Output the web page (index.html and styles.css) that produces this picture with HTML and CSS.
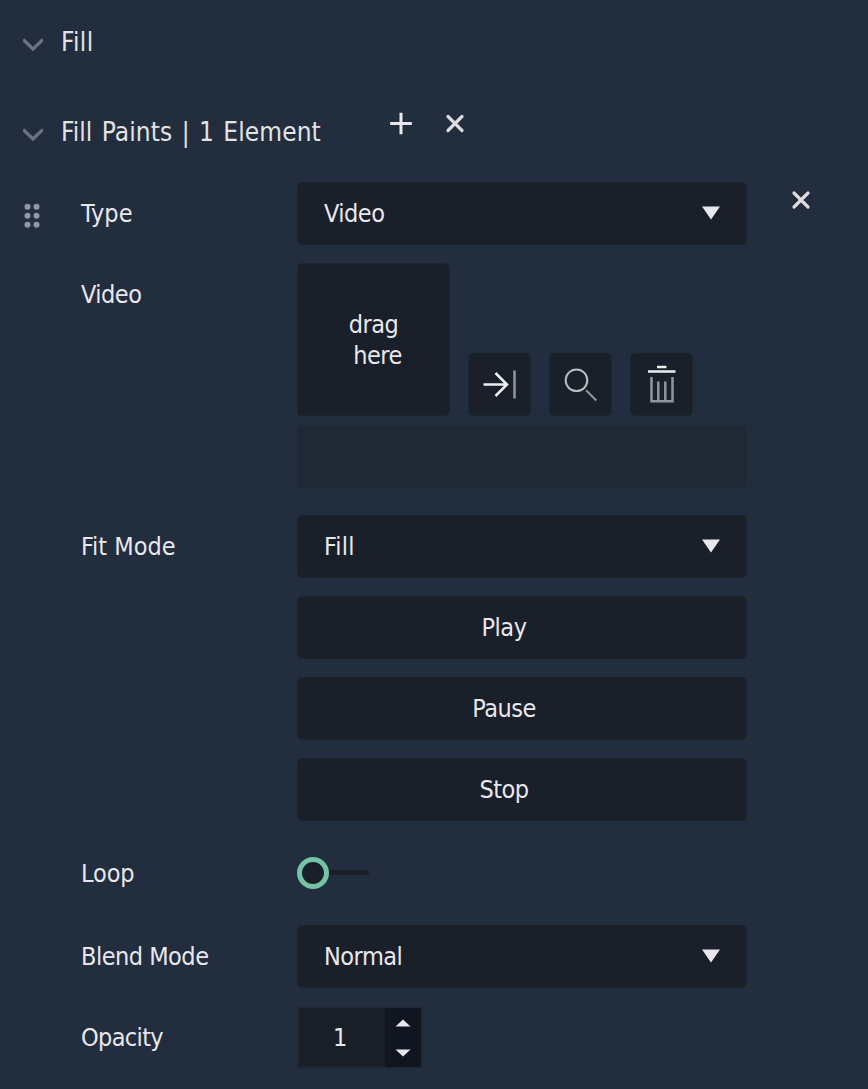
FILE: index.html
```html
<!DOCTYPE html>
<html lang="en">
<head>
<meta charset="utf-8">
<title>Fill</title>
<link rel="stylesheet" href="styles.css">
</head>
<body>
<main class="panel">
  <header class="section">
    <svg class="chevron" width="20" height="18" viewBox="0 0 20 18"><path d="M0 3.5L10 13L20 3.5"/></svg>
    <h2 class="title title-fill">Fill</h2>
  </header>
  <header class="section section-paints">
    <svg class="chevron" width="20" height="18" viewBox="0 0 20 18"><path d="M0 3.5L10 13L20 3.5"/></svg>
    <h2 class="title title-paints">Fill Paints | 1 Element</h2>
    <svg class="add" width="24" height="24" viewBox="0 0 24 24"><path d="M1.2 12.5H22.8M12 1.7V23.3"/></svg>
    <svg class="remove" width="20" height="20" viewBox="0 0 20 20"><path d="M3 2.5L17 16.5M17 2.5L3 16.5"/></svg>
  </header>

  <div class="row">
    <svg class="grip" width="16" height="26" viewBox="0 0 16 26"><circle cx="3.5" cy="3.7" r="3"/><circle cx="12.5" cy="3.7" r="3"/><circle cx="3.5" cy="12.7" r="3"/><circle cx="12.5" cy="12.7" r="3"/><circle cx="3.5" cy="21.7" r="3"/><circle cx="12.5" cy="21.7" r="3"/></svg>
    <span class="label"><span class="t-type">Type</span></span>
    <div class="box select"><span class="t-video">Video</span><svg width="18" height="14" viewBox="0 0 18 14"><path d="M0 .5H18L9 13.5Z"/></svg></div>
    <svg class="remove remove-row" width="20" height="20" viewBox="0 0 20 20"><path d="M3 3L17 17M17 3L3 17"/></svg>
  </div>

  <div class="row row-media">
    <span class="label"><span class="t-video">Video</span></span>
    <div class="media">
      <div class="box drop"><span class="drag">drag</span><span class="here">here</span></div>
      <div class="box tool"><svg width="63" height="63" viewBox="0 0 63 63"><path class="bright" d="M15.5 31.5H38.5M27.5 20L39 31.5L27.5 43"/><path class="dim thick" d="M46.5 17.5V45.5"/></svg></div>
      <div class="box tool"><svg width="63" height="63" viewBox="0 0 63 63"><circle class="mid" cx="27.5" cy="27.3" r="10.8"/><path class="dim" d="M37 37.3L47.3 47.5"/></svg></div>
      <div class="box tool"><svg width="63" height="63" viewBox="0 0 63 63"><path class="lid" d="M27 14H36.5M18 18.5H45.5"/><path class="dim thick" d="M21.5 24V48.3H42.5V24M28.3 28.5V48M35.3 28.5V48"/></svg></div>
    </div>
  </div>

  <div class="path-field"></div>

  <div class="row row-fit">
    <span class="label"><span class="t-fit">Fit Mode</span></span>
    <div class="box select"><span class="t-fill">Fill</span><svg width="18" height="14" viewBox="0 0 18 14"><path d="M0 .5H18L9 13.5Z"/></svg></div>
  </div>
  <div class="actions">
    <div class="box button"><span class="t-play">Play</span></div>
    <div class="box button"><span class="t-pause">Pause</span></div>
    <div class="box button"><span class="t-stop">Stop</span></div>
  </div>

  <div class="row row-loop">
    <span class="label"><span class="t-loop">Loop</span></span>
    <div class="toggle"><span class="knob"></span><span class="track"></span></div>
  </div>

  <div class="row row-blend">
    <span class="label"><span class="t-blend">Blend Mode</span></span>
    <div class="box select"><span class="t-normal">Normal</span><svg width="18" height="14" viewBox="0 0 18 14"><path d="M0 .5H18L9 13.5Z"/></svg></div>
  </div>

  <div class="row row-opacity">
    <span class="label"><span class="t-opacity">Opacity</span></span>
    <div class="spinner">
      <span class="value">1</span>
      <span class="steps"><svg width="16" height="8" viewBox="0 0 16 8"><path d="M.5 7.5H15.5L8 .5Z"/></svg><svg width="16" height="8" viewBox="0 0 16 8"><path d="M.5 .5H15.5L8 7.5Z"/></svg></span>
    </div>
  </div>
</main>
</body>
</html>
```
FILE: styles.css
```css
* { box-sizing: border-box; }
body {
  margin: 0;
  background: #222d3d;
  color: #e9e7ee;
  font: 25px/31px Tahoma, "DejaVu Sans Condensed", "DejaVu Sans", sans-serif;
  font-stretch: condensed;
  letter-spacing: -0.5px;
}
svg { display: block; flex: none; fill: none; }
span { white-space: nowrap; }
.panel { height: 1089px; overflow: hidden; padding-top: 22px; }

.section { display: flex; height: 40px; padding-left: 23px; }
.section-paints { margin-top: 50px; }
.title { margin: 0 0 0 18px; font-size: 26px; font-weight: 400; line-height: 40px; letter-spacing: 0.1px; white-space: nowrap; color: #e2e3e5; }
.title-fill { letter-spacing: 0.4px; }
.title-paints { width: 329px; word-spacing: 1.8px; }
.chevron { margin-top: 14px; stroke: #69727d; stroke-width: 3.4; }
.add { margin: -1px 0 0 -1px; stroke: #e9e7ee; stroke-width: 3; }
.remove { margin: 2px 0 0 32px; stroke: #dddce3; stroke-width: 3.2; stroke-linecap: round; }

.row { display: grid; grid-template-columns: 81px 216px 450px 1fr; margin-top: 30px; }
.label { grid-column: 2; height: 63px; line-height: 63px; }
.grip { margin: 21px 0 0 24px; fill: #9496a3; }
.remove-row { margin: 8px 0 0 44px; }

.t-type { letter-spacing: 0.1px; }
.t-fit { letter-spacing: 0; }
.t-fill { letter-spacing: 0.2px; }
.t-loop { letter-spacing: -0.1px; }
.t-opacity { letter-spacing: -0.65px; }

.box { height: 63px; background: #1a2029; border: 1px solid #1c242f; border-radius: 5px; }
.select { display: flex; align-items: center; justify-content: space-between; padding: 0 26px; }
.select svg { fill: #e9e7ee; margin-top: -1px; }

.row-media { margin-top: 18px; }
.media { display: flex; align-items: flex-end; gap: 18px; }
.drop { display: flex; flex-direction: column; justify-content: center; align-items: center; width: 153px; height: 153px; }
.here { margin-left: 8px; }
.tool { width: 63px; }
.tool svg { margin: -1px; stroke-width: 2; }
.bright { stroke: #eceeee; stroke-width: 2.5; }
.mid { stroke: #b9bcbf; }
.dim { stroke: #92969c; }
.thick { stroke-width: 2.5; }
.lid { stroke: #eceeee; stroke-width: 2.5; }

.path-field { width: 450px; height: 63px; margin: 9px 0 0 297px; background: #1f2835; border: 1px solid #202a38; }
.row-fit { margin-top: 27px; }
.actions { display: grid; gap: 18px; width: 450px; margin: 18px 0 0 297px; }
.button { display: flex; align-items: center; justify-content: center; }
.button span { margin-left: -36px; }

.row-loop { margin-top: 21px; }
.toggle { display: flex; align-items: center; height: 61px; }
.knob { width: 32px; height: 32px; border: 5px solid #74c3a3; border-radius: 50%; background: #1a2029; }
.track { width: 40px; height: 5px; background: #1a2029; border-radius: 0 3px 3px 0; }
.row-blend { margin-top: 20px; }
.row-opacity { margin-top: 18px; }
.spinner { display: flex; width: 126px; height: 63px; border: 2px solid #202938; }
.value { width: 86px; background: #1a2028; line-height: 60px; text-align: center; padding-right: 4px; }
.steps { display: flex; flex: 1; flex-direction: column; align-items: center; gap: 22px; padding-top: 11px; background: #101521; }
.steps svg { fill: #e9e7ee; }
```
